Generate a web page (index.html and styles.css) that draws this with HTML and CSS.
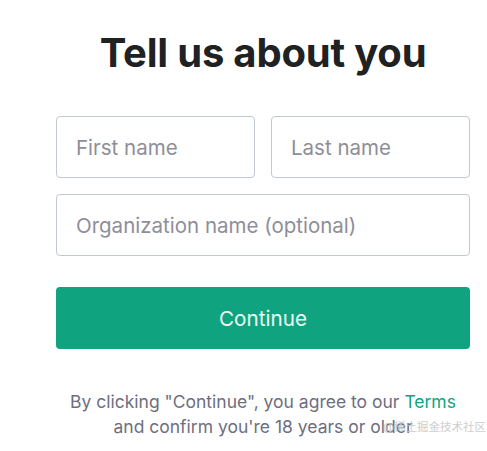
FILE: index.html
```html
<!DOCTYPE html>
<html>
<head>
<meta charset="utf-8">
<link rel="stylesheet" href="styles.css">
</head>
<body>
<main class="page">
  <h1 class="title">Tell us about you</h1>
  <form class="form">
    <div class="row">
      <input class="field field-half" type="text" placeholder="First name">
      <input class="field field-half" type="text" placeholder="Last name">
    </div>
    <input class="field" type="text" placeholder="Organization name (optional)">
    <button class="continue" type="button">Continue</button>
  </form>
  <p class="legal">By clicking "Continue", you agree to our <a class="terms" href="#">Terms</a><br>and confirm you're 18 years or older</p>
  <span class="watermark">@稀土掘金技术社区</span>
</main>
</body>
</html>
```
FILE: styles.css
```css
html, body {
  margin: 0;
  padding: 0;
  background: #ffffff;
}
body {
  font-family: Inter, "Noto Sans CJK SC", sans-serif;
  width: 487px;
  height: 451px;
  overflow: hidden;
}
.page {
  position: relative;
  width: 414px;
  height: 451px;
  margin-left: 56px;
  display: flex;
  flex-direction: column;
  align-items: stretch;
}
.title {
  margin: 29px 0 0;
  text-align: center;
  font-size: 40px;
  font-weight: 700;
  color: #202123;
  letter-spacing: -0.2px;
  line-height: 48px;
}
.form {
  margin-top: 39px;
  display: flex;
  flex-direction: column;
  gap: 16px;
}
.row {
  display: flex;
  gap: 16px;
}
.field {
  flex: none;
  height: 62px;
  box-sizing: border-box;
  border: 1px solid #c2c8d0;
  border-radius: 4px;
  padding: 0 19px;
  font-family: Inter, sans-serif;
  font-size: 20.5px;
  color: #2d333a;
  background: #fff;
  outline: none;
}
.field-half {
  flex: 1;
  min-width: 0;
}
.field::placeholder {
  color: #8e8e98;
}
.continue {
  margin-top: 15px;
  height: 62px;
  border: none;
  border-radius: 4px;
  background: #10a37f;
  color: #e9fbf4;
  font-family: Inter, sans-serif;
  font-size: 20.7px;
  font-weight: 400;
}
.legal {
  margin: 40px 0 0;
  text-align: center;
  font-size: 17.5px;
  line-height: 25px;
  color: #6e6e80;
}
.terms {
  color: #10a37f;
  text-decoration: none;
}
.watermark {
  position: absolute;
  left: 327px;
  top: 420px;
  font-size: 11.5px;
  line-height: 14px;
  white-space: nowrap;
  color: #c9c9c9;
  opacity: 0.9;
}
```
